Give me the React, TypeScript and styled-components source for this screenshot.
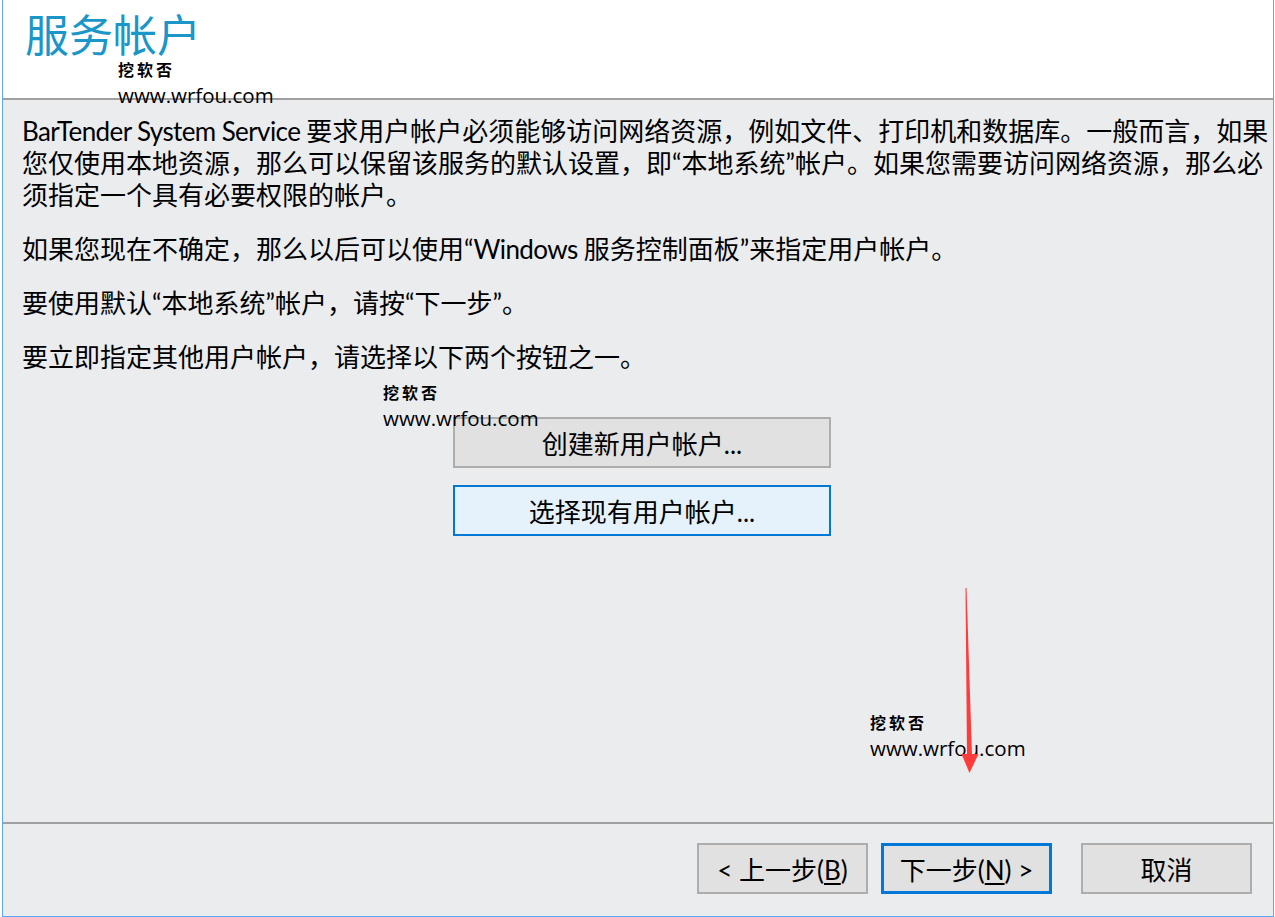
import React from "react";
import styled, { createGlobalStyle } from "styled-components";

const GlobalStyle = createGlobalStyle`
  html, body {
    margin: 0;
    padding: 0;
    background: #ffffff;
  }
  body {
    font-family: "Lato", "Noto Sans CJK SC", sans-serif;
    color: #000000;
  }
`;

const Latin = styled.span`
  letter-spacing: -0.6px;
`;

const paragraphs: React.ReactNode[][] = [
  [
    <>
      <Latin>BarTender System Service </Latin>
      要求用户帐户必须能够访问网络资源，例如文件、打印机和数据库。一般而言，如果
    </>,
    "您仅使用本地资源，那么可以保留该服务的默认设置，即“本地系统”帐户。如果您需要访问网络资源，那么必",
    "须指定一个具有必要权限的帐户。",
  ],
  [
    <>
      如果您现在不确定，那么以后可以使用“<Latin>Windows </Latin>服务控制面板”来指定用户帐户。
    </>,
  ],
  ["要使用默认“本地系统”帐户，请按“下一步”。"],
  ["要立即指定其他用户帐户，请选择以下两个按钮之一。"],
];

const watermarks = [
  { x: 115, y: 59 },
  { x: 380, y: 382 },
  { x: 867, y: 712 },
];

export default function App() {
  return (
    <>
      <GlobalStyle />
      <Window>
        <Header>
          <Title>服务帐户</Title>
        </Header>
        <Body>
          {paragraphs.map((lines, i) => (
            <Paragraph key={i}>
              {lines.map((line, j) => (
                <Line key={j}>{line}</Line>
              ))}
            </Paragraph>
          ))}
          <ButtonStack>
            <WideButton>创建新用户帐户...</WideButton>
            <WideButton $focused>选择现有用户帐户...</WideButton>
          </ButtonStack>
        </Body>
        <Footer>
          <NavButton $gap={13}>
            &lt; 上一步(<Accel>B</Accel>)
          </NavButton>
          <NavButton $gap={29} $default>
            下一步(<Accel>N</Accel>) &gt;
          </NavButton>
          <NavButton>取消</NavButton>
        </Footer>

        {watermarks.map((w, i) => (
          <Watermark key={i} style={{ left: w.x, top: w.y }}>
            <WatermarkName>挖软否</WatermarkName>
            <WatermarkUrl>www.wrfou.com</WatermarkUrl>
          </Watermark>
        ))}

        <Arrow width="26" height="192" viewBox="0 0 26 192">
          <polygon points="9.5,3 10.5,3 16,171 11,171" fill="#ff3b3b" />
          <polygon points="5.5,169 22.5,169 13.5,188" fill="#ff3b3b" />
        </Arrow>
      </Window>
    </>
  );
}

const Window = styled.div`
  position: relative;
  box-sizing: border-box;
  margin-left: 2px;
  width: 1272px;
  height: 917px;
  display: flex;
  flex-direction: column;
  background: #ebecee;
  border-left: 1px solid #5ea7f2;
  border-right: 1px solid #5ea7f2;
  border-bottom: 1px solid #5ea7f2;
`;

const Header = styled.div`
  box-sizing: border-box;
  height: 100px;
  padding: 11px 0 0 22px;
  background: #ffffff;
  border-bottom: 2px solid #a0a0a0;
`;

const Title = styled.h1`
  margin: 0;
  font-family: "Noto Sans CJK SC", sans-serif;
  font-size: 44px;
  line-height: 44px;
  font-weight: 400;
  color: #1a96c8;
`;

const Body = styled.div`
  flex: 1;
  display: flex;
  flex-direction: column;
  gap: 22px;
  padding: 15px 19px 0 19px;
`;

const Paragraph = styled.p`
  margin: 0;
  font-size: 26px;
  line-height: 32px;
`;

const Line = styled.span`
  display: block;
  white-space: nowrap;
`;

const ButtonStack = styled.div`
  display: flex;
  flex-direction: column;
  gap: 17px;
  margin: 22px 0 0 431px;
`;

const WideButton = styled.button<{ $focused?: boolean }>`
  box-sizing: border-box;
  width: 378px;
  height: 51px;
  padding: 0;
  font-family: inherit;
  font-size: 26px;
  color: #000000;
  background: ${({ $focused }) => ($focused ? "#e5f1fb" : "#e1e1e1")};
  border: 2px solid ${({ $focused }) => ($focused ? "#0078d7" : "#adadad")};
  border-radius: 0;
`;

const Footer = styled.div`
  box-sizing: border-box;
  height: 94px;
  display: flex;
  justify-content: flex-end;
  align-items: flex-start;
  padding: 19px 21px 0 0;
  border-top: 2px solid #a0a0a0;
`;

const NavButton = styled.button<{ $gap?: number; $default?: boolean }>`
  box-sizing: border-box;
  width: 171px;
  height: 51px;
  margin-right: ${({ $gap }) => $gap ?? 0}px;
  padding: 0;
  font-family: inherit;
  font-size: 26px;
  color: #000000;
  background: #e1e1e1;
  border: ${({ $default }) => ($default ? "3px solid #0078d7" : "2px solid #adadad")};
  border-radius: 0;
`;

const Accel = styled.span`
  text-decoration: underline;
  text-underline-offset: 3px;
`;

const Watermark = styled.div`
  position: absolute;
  display: flex;
  flex-direction: column;
  pointer-events: none;
`;

const WatermarkName = styled.span`
  font-family: "Noto Sans CJK SC", serif;
  font-size: 16px;
  line-height: 20px;
  letter-spacing: 3px;
  font-weight: 700;
  color: #000000;
`;

const WatermarkUrl = styled.span`
  margin-top: 4px;
  font-family: "Open Sans", sans-serif;
  font-size: 20.5px;
  line-height: 24px;
  color: #000000;
`;

const Arrow = styled.svg`
  position: absolute;
  left: 953px;
  top: 585px;
`;
